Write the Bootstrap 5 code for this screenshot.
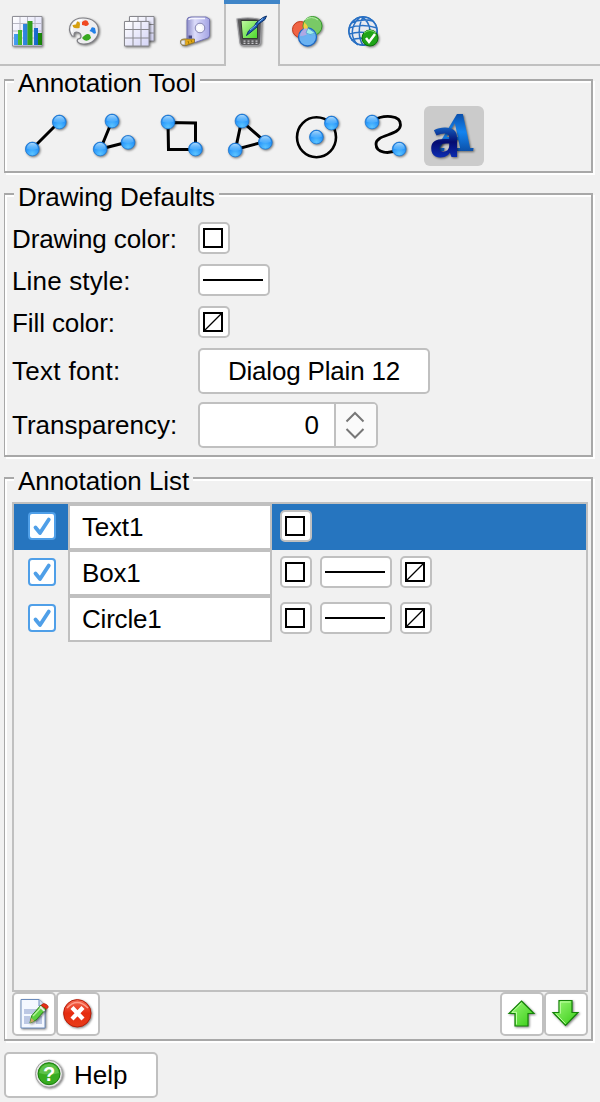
<!DOCTYPE html>
<html lang="en">
<head>
<meta charset="utf-8">
<meta name="viewport" content="width=device-width, initial-scale=1">
<title>Annotation Tool</title>
<link href="https://cdn.jsdelivr.net/npm/bootstrap@5.3.0/dist/css/bootstrap.min.css" rel="stylesheet">
<style>
body{background:#f1f1f1;color:#000;font-family:"Liberation Sans",Arial,sans-serif;font-size:26px;line-height:30px;width:600px;height:1102px;overflow:hidden}
svg{display:block;overflow:visible}
.tabs{height:66px;box-shadow:inset 0 -2px #c0c0c0}
.tab{width:56px;height:66px;border:0;padding:16px 12px 18px;background:transparent}
.tab.on{background:#f1f1f1;border:solid #c0c0c0;border-width:0 2px;padding:16px 10px 18px;box-shadow:-2px 0 #c0c0c0;border-left:0;margin-left:2px;width:54px}
.tab.on::before{content:"";display:block;height:4px;margin:-16px -12px 12px -12px;background:#3f85c8}
.panel{margin-left:4px;width:589px;border:2px solid #a8a8a8;border-left-width:1px;box-shadow:2px 2px #fff,inset 2px 2px #fff}
.ptitle{width:max-content;background:#f1f1f1;margin:-13px 0 0 9px;padding:0 4px;height:30px;letter-spacing:-.06px}
.tool{width:60px;height:60px;border:0;padding:0;background:transparent;border-radius:6px}
.tool.on{background:#cbcbcb}
.bx{background:#fff;border:2px solid #c0c0c0;border-radius:5px;color:#000;padding:0;font-size:26px;line-height:30px}
.sw{width:32px;height:32px;padding:3px}
.ln{width:72px;height:32px;padding:13px 3px}
.ln span{display:block;width:60px;height:2px;background:#000}
.frm{margin-left:7px}
.lab{width:186px}
.r42{height:42px}
.r42 .lab{padding-top:2px}
.spin{width:180px;height:46px}
.spin .arrows{width:42px;border-left:2px solid #c0c0c0;background:#fafafa;border-radius:0 3px 3px 0}
.alist{margin:6px 0 0 7px;width:576px;height:490px;border:2px solid #c0c0c0}
.arow{height:46px}
.arow.on{background:#2675bf}
.cell{width:54px;padding:8px 14px}
.tick{width:28px;height:28px;background:#fff;border:2px solid #4f9fe8;border-radius:4px}
.fld{width:204px;height:46px;border:2px solid #c0c0c0;background:#fff;padding:6px 12px;letter-spacing:-.2px}
.acts{margin-left:7px;width:576px;height:47px}
.ib{width:44px;height:44px;padding:4px}
</style>
</head>
<body>
<svg width="0" height="0" class="position-absolute">
<defs>
<radialGradient id="gb" cx=".5" cy=".85" r=".9"><stop offset="0" stop-color="#5cc4ff"/><stop offset=".5" stop-color="#2d9bfb"/><stop offset="1" stop-color="#1276e0"/></radialGradient>
<linearGradient id="gh" x1="0" y1="0" x2="0" y2="1"><stop offset="0" stop-color="#c4e8ff" stop-opacity=".85"/><stop offset="1" stop-color="#64bcff" stop-opacity=".4"/></linearGradient>
<linearGradient id="blu" x1="0" x2="1" y1="0" y2="0"><stop offset="0" stop-color="#46a0f0"/><stop offset="1" stop-color="#1465c8"/></linearGradient>
<linearGradient id="grn" x1="0" x2="1" y1="0" y2="0"><stop offset="0" stop-color="#4cc030"/><stop offset="1" stop-color="#168208"/></linearGradient>
<linearGradient id="lav" x1="0" y1="0" x2="1" y2="1"><stop offset="0" stop-color="#fff"/><stop offset="1" stop-color="#d4d4f6"/></linearGradient>
<linearGradient id="box" x1="0" x2="1" y1="0" y2="0"><stop offset="0" stop-color="#8c8cc8"/><stop offset=".35" stop-color="#dcdcfa"/><stop offset="1" stop-color="#a4a4e4"/></linearGradient>
<linearGradient id="la" gradientUnits="userSpaceOnUse" x1="0" y1="7" x2="0" y2="45"><stop offset="0" stop-color="#0a4ca8"/><stop offset=".5" stop-color="#1484f0"/><stop offset="1" stop-color="#0c50a8"/></linearGradient>
<linearGradient id="lb" gradientUnits="userSpaceOnUse" x1="0" y1="21" x2="0" y2="51"><stop offset="0" stop-color="#1460c0"/><stop offset=".5" stop-color="#040c70"/><stop offset="1" stop-color="#0c2cb0"/></linearGradient>
<linearGradient id="arr" x1="0" y1="0" x2="1" y2="1"><stop offset="0" stop-color="#9cf878"/><stop offset="1" stop-color="#36cc14"/></linearGradient>
<linearGradient id="red" x1="0" y1="0" x2="0" y2="1"><stop offset="0" stop-color="#f46c54"/><stop offset=".5" stop-color="#e62c10"/><stop offset="1" stop-color="#e83c18"/></linearGradient>
<linearGradient id="scr" x1="0" y1="0" x2="1" y2="1"><stop offset="0" stop-color="#c4f8a4"/><stop offset="1" stop-color="#48d828"/></linearGradient>
<filter id="sh" x="-20%" y="-20%" width="150%" height="150%" color-interpolation-filters="sRGB"><feDropShadow dx="1" dy="1" stdDeviation=".8" flood-opacity=".5"/></filter>
<g id="node"><g filter="url(#sh)"><circle r="6.900" fill="url(#gb)" stroke="#1670cc" stroke-width=".7"/></g><path d="M-5.500-.2C-5.800-8 5.800-8 5.500-.2Q0 1.500-5.500-.2Z" fill="url(#gh)"/></g>
<symbol id="sq" viewBox="0 0 20 20"><path d="M1 1H19V19H1Z" fill="#fff" stroke="#000" stroke-width="2"/></symbol>
<symbol id="nf" viewBox="0 0 20 20"><path d="M1 1H19V19H1Z" fill="#fff" stroke="#000" stroke-width="2"/><path d="M2 18 18 2" stroke="#000" stroke-width="1.300"/></symbol>
<symbol id="tk" viewBox="0 0 24 24"><path d="M5.500 13.500 10 19 18.800 5.500" fill="none" stroke="#4f9fe8" stroke-width="3.800" stroke-linecap="round" stroke-linejoin="round"/></symbol>
</defs>
</svg>

<nav class="tabs d-flex">
<button class="tab"><svg width="32" height="32"><g filter="url(#sh)"><path d="M.5.500H30V30H.5Z" fill="url(#lav)" stroke="#909098"/></g><path d="M1 7.500H30M1 15H30M1 22H30M8 1V30M15.500 1V30M23 1V30" stroke="#b8b8c4" fill="none"/><path d="M2 18H6V29H2ZM11 8H15.500V29H11ZM22 12H26V29H22Z" fill="url(#blu)"/><path d="M6 14H10V29H6ZM15.500 5H20.500V29H15.500ZM26 17H30V29H26Z" fill="url(#grn)"/></svg></button>
<button class="tab"><svg width="32" height="32"><path filter="url(#sh)" d="M4 20C-2 11 4 2 15 2 25 2 31 8 30.500 15 30 23 23 28.500 15 28 10 27.500 8 25 10 23 14 23 14 18 10.500 16.500 7 15.500 5 17 6.500 20Z" fill="#eeeef0" stroke="#808086" stroke-width="1.200"/><path d="M4 16C3 10 7 4 14 4" fill="none" stroke="#fff" stroke-width="1.500"/><path d="M4.500 9 8 8.500 9 5.500Q12 5 12 8L11.500 12Q7 13 5 11Z" fill="#d6a010"/><path d="M14 6Q17 3 19.500 5L21 8Q19 11 16.500 9.500L14 9Z" fill="#f04820"/><path d="M23 13Q23 10 27 12L28 17Q26 19 24 16L21.500 15Z" fill="#2080e8"/><path d="M14 22Q19 16 22 19L23 22Q20 26 16 24Z" fill="#38a820"/></svg></button>
<button class="tab"><svg width="32" height="32"><g stroke="#88888e" fill="url(#lav)"><path filter="url(#sh)" d="M5.500.500H30V25H5.500Z"/><path d="M14 1V25M22 1V25M6 8.500H30M6 17H30" fill="none"/><path filter="url(#sh)" d="M.5 5.500H25V30H.5Z"/><path d="M9 6V30M17 6V30M1 13.500H25M1 22H25" fill="none"/></g></svg></button>
<button class="tab"><svg width="32" height="32"><g filter="url(#sh)"><path d="M7 4Q7 1 11 1H26L29.500 3V20L28 22 15 26.500 7 23Z" fill="url(#box)" stroke="#7474b4"/><path d="M.5 25Q1 23 4 23L14.500 23V26.500L6 29.500Q2 30 1 28Z" fill="#e4a818" stroke="#806c30" stroke-width=".8"/></g><path d="M9 4Q9 2.500 12 2.500H25" stroke="#f4f4ff" stroke-width="1.500" fill="none"/><circle cx="20" cy="12" r="4.800" fill="#f4f4fa" stroke="#8484b4"/><circle cx="19.500" cy="12" r="2.500" fill="#fff"/><path d="M8.500 19.500H12V22.500H8.500Z" fill="#484884"/><path d="M1 25Q2 24 5 24V29Q1 29 1 27Z" fill="#e8e8e8" stroke="#888" stroke-width=".6"/><path d="M8 25 9 28M11 24 12 26.500" stroke="#a07800"/></svg></button>
<button class="tab on"><svg width="32" height="32"><path filter="url(#sh)" d="M1 3Q12 1 22 3L25.500 4 24.500 27Q24 29.500 21 29.500H7Q4.500 29.500 4 27Z" fill="#58585a" stroke="#9c9ca0" stroke-width="1.200"/><path d="M5 4.500H21.500V22.500H6.500Z" fill="url(#scr)" stroke="#303830"/><path d="M8.500 24.500V28M12.500 24.500V28M16.500 24.500V28M20.500 24.500V28" stroke="#c8c8cc" stroke-width="2" stroke-dasharray="1.200 1"/><path d="M10.500 19.500 12.500 15 19 9 20 7 27 1.500 30.500 0 29 3.500 22 8.500 21 11 15 16Z" fill="#2060b8" stroke="#0c3068"/><path d="M14 14 20 9M22 6.500 27 2.500" stroke="#80b8f0"/></svg></button>
<button class="tab"><svg width="32" height="32"><g filter="url(#sh)"><circle cx="8.500" cy="13.500" r="8" fill="#f06444" stroke="#c03818"/><circle cx="20.500" cy="10" r="9.500" fill="#78cc64" fill-opacity=".95" stroke="#349c28"/><circle cx="15.500" cy="21" r="9" fill="#68b4f8" fill-opacity=".95" stroke="#1c68c4" stroke-width="1.300"/></g><path d="M12 6Q18 11 15.500 17Q10 16 12 6" fill="#f4d040"/><path d="M8 20Q9 14 14 12L17 16Q15 20 8 20" fill="#b0a8e4"/><path d="M16 12 23 17Q18 20 14 17Z" fill="#a4eee8" stroke="#388ccc" stroke-width=".6"/><path d="M13 4Q19-1 26 4" stroke="#b4eca8" fill="none"/></svg></button>
<button class="tab"><svg width="32" height="32"><circle cx="15" cy="15" r="14.500" fill="#e8eaf0" stroke="#2468b8"/><g fill="none" stroke="#2870c4" stroke-width="1.500"><path d="M12 1C1 11 3 22 10 29M15 1C10 10 10 22 15 29M14 1C24 7 24 22 18 29M3 7Q13 2 25 5M1 12Q14 7 29 12M1 18Q14 14 29 19M3 24Q14 20 25 25"/><circle cx="15" cy="15" r="14"/></g><g filter="url(#sh)"><circle cx="22" cy="22" r="8" fill="#20a418" stroke="#087408"/></g><path d="M16 17Q22 12 28 17" stroke="#80dc70" fill="none"/><path d="M18 22 21 26 27 18" fill="none" stroke="#fff" stroke-width="2.500"/></svg></button>
</nav>

<section class="panel" style="margin-top:13px;height:94px">
<div class="ptitle">Annotation Tool</div>
<div class="d-flex gap-2" style="margin:8px 0 0 11px">
<button class="tool"><svg width="60" height="60"><path d="M16 43 43 16" stroke="#000" stroke-width="3"/><use href="#node" x="43.300" y="16"/><use href="#node" x="16.300" y="43"/></svg></button>
<button class="tool"><svg width="60" height="60"><path d="M28 15 16.500 43 44 36" fill="none" stroke="#000" stroke-width="3"/><use href="#node" x="28" y="15"/><use href="#node" x="16.200" y="43"/><use href="#node" x="44" y="36.300"/></svg></button>
<button class="tool"><svg width="60" height="60"><path d="M16 16.500 43.500 17V43.500H16.500Z" fill="none" stroke="#000" stroke-width="3"/><use href="#node" x="16" y="16"/><use href="#node" x="43.400" y="43"/></svg></button>
<button class="tool"><svg width="60" height="60"><path d="M21.500 15 15.500 43.500 45 35.500Z" fill="none" stroke="#000" stroke-width="3"/><use href="#node" x="22" y="15"/><use href="#node" x="15.200" y="44"/><use href="#node" x="45.300" y="36.300"/></svg></button>
<button class="tool"><svg width="60" height="60"><ellipse cx="28.500" cy="31.200" rx="19.500" ry="20" fill="none" stroke="#000" stroke-width="2.600"/><use href="#node" x="43.400" y="17"/><use href="#node" x="28.400" y="31"/></svg></button>
<button class="tool"><svg width="60" height="60"><path d="M16 15C28 8 45 9 44.500 19 44 30 20 28 20 38 20 47 33 49 43 43" fill="none" stroke="#000" stroke-width="2.800"/><use href="#node" x="16" y="16"/><use href="#node" x="43.200" y="43"/></svg></button>
<button class="tool on"><svg width="60" height="60"><g filter="url(#sh)"><text x="13" y="45" textLength="39" lengthAdjust="spacingAndGlyphs" font-family="DejaVu Serif" font-weight="700" font-style="italic" font-size="51" fill="url(#la)">A</text></g><g filter="url(#sh)"><text x="5" y="50.500" textLength="32" lengthAdjust="spacingAndGlyphs" font-family="Open Sans" font-weight="700" font-size="53" fill="url(#lb)">a</text></g></svg></button>
</div>
</section>

<section class="panel" style="margin-top:20px;height:264px">
<div class="ptitle">Drawing Defaults</div>
<div class="frm">
<div class="d-flex align-items-center r42" style="margin-top:5px"><div class="lab" style="letter-spacing:-.1px">Drawing color:</div><button class="bx sw"><svg width="20" height="20"><use href="#sq"/></svg></button></div>
<div class="d-flex align-items-center r42"><div class="lab" style="letter-spacing:.15px">Line style:</div><button class="bx ln"><span></span></button></div>
<div class="d-flex align-items-center r42"><div class="lab" style="letter-spacing:-.1px">Fill color:</div><button class="bx sw"><svg width="20" height="20"><use href="#nf"/></svg></button></div>
<div class="d-flex align-items-center" style="margin-top:5px"><div class="lab" style="letter-spacing:.3px">Text font:</div><button class="bx" style="width:232px;height:46px;letter-spacing:-.18px">Dialog Plain 12</button></div>
<div class="d-flex align-items-center mt-2"><div class="lab">Transparency:</div>
<div class="bx spin d-flex"><div class="flex-fill text-end" style="padding:6px 15px 0 0">0</div><div class="arrows"><svg width="40" height="42"><path d="M10.500 17.500 19 9 27.500 17.500M10.500 25 19 33.500 27.500 25" fill="none" stroke="#777" stroke-width="2"/></svg></div></div></div>
</div>
</section>

<section class="panel" style="margin-top:20px;height:564px">
<div class="ptitle">Annotation List</div>
<div class="alist">
<div class="arow on d-flex"><div class="cell"><div class="tick"><svg width="24" height="24"><use href="#tk"/></svg></div></div><div class="fld">Text1</div><div class="d-flex align-items-start gap-2 px-2" style="padding-top:6px"><button class="bx sw"><svg width="20" height="20"><use href="#sq"/></svg></button></div></div>
<div class="arow d-flex"><div class="cell"><div class="tick"><svg width="24" height="24"><use href="#tk"/></svg></div></div><div class="fld">Box1</div><div class="d-flex align-items-start gap-2 px-2" style="padding-top:6px"><button class="bx sw"><svg width="20" height="20"><use href="#sq"/></svg></button><button class="bx ln"><span></span></button><button class="bx sw"><svg width="20" height="20"><use href="#nf"/></svg></button></div></div>
<div class="arow d-flex"><div class="cell"><div class="tick"><svg width="24" height="24"><use href="#tk"/></svg></div></div><div class="fld">Circle1</div><div class="d-flex align-items-start gap-2 px-2" style="padding-top:6px"><button class="bx sw"><svg width="20" height="20"><use href="#sq"/></svg></button><button class="bx ln"><span></span></button><button class="bx sw"><svg width="20" height="20"><use href="#nf"/></svg></button></div></div>
</div>
<div class="acts d-flex">
<button class="bx ib"><svg width="32" height="32"><path filter="url(#sh)" d="M3 1.500H21L27 8V30H3Z" fill="#f4f8ff" stroke="#6c8cbc"/><path d="M21 1.500V8H27" fill="#d4e0f4" stroke="#6c8cbc"/><path d="M6 11H24V16H6ZM6 18H12V26H6ZM18 18H24V26H18Z" fill="#bcc8e4"/><path filter="url(#sh)" d="M12 25 13.500 18 23 7 28 11 18 22Z" fill="#5cd040" stroke="#288818"/><path d="M15 18 24 8.500" stroke="#b4f49c" stroke-width="1.500"/><path d="M23 7.500Q25 4 28.500 6.500T28.500 11Z" fill="#e83018" stroke="#a82010" stroke-width=".7"/><path d="M22 8.500 26.500 13" stroke="#e8e8e8" stroke-width="1.800"/><path d="M12 25 13.200 20 16.500 23Z" fill="#d0a468"/></svg></button>
<button class="bx ib"><svg width="32" height="32"><circle filter="url(#sh)" cx="15.300" cy="15.300" r="13.700" fill="url(#red)" stroke="#b81c08"/><path d="M5 10Q15-1 26 10" fill="none" stroke="#ff9c88" stroke-width="1.500"/><path d="M10 9.500 21 21M21 9.500 10 21" stroke="#fff" stroke-width="4.200"/></svg></button>
<button class="bx ib ms-auto"><svg width="32" height="32"><path filter="url(#sh)" d="M15.500 3 28 15.500H22V28H9V15.500H3Z" fill="url(#arr)" stroke="#148408" stroke-width="1.200"/><path d="M15.500 5 6 14.300H10.500V26.500" fill="none" stroke="#c0ffa4"/></svg></button>
<button class="bx ib"><svg width="32" height="32"><path filter="url(#sh)" d="M9 2.500H22V14.500H28L15.500 27.500 3 14.500H9Z" fill="url(#arr)" stroke="#148408" stroke-width="1.200"/><path d="M10.300 15.700V4H20.500M6 15.700 15.500 25.700" fill="none" stroke="#c0ffa4"/></svg></button>
</div>
</section>

<button class="bx d-flex align-items-center" style="margin:11px 0 0 4px;width:154px;height:46px;padding-left:28px">
<svg width="32" height="32"><circle filter="url(#sh)" cx="15" cy="14.700" r="13.500" fill="#e6e6e6" stroke="#a0a0a0"/><circle cx="15" cy="14.700" r="11" fill="#38ac20" stroke="#187c0c"/><path d="M5 14Q7 5 15 5T25 14Q15 17 5 14Z" fill="#7cd46c" opacity=".55"/><text x="15" y="22" text-anchor="middle" font-family="Liberation Sans" font-weight="700" font-size="20" fill="#fff">?</text></svg>
<span style="margin-left:8px">Help</span></button>
<script src="https://cdn.jsdelivr.net/npm/bootstrap@5.3.0/dist/js/bootstrap.bundle.min.js"></script>
</body>
</html>
